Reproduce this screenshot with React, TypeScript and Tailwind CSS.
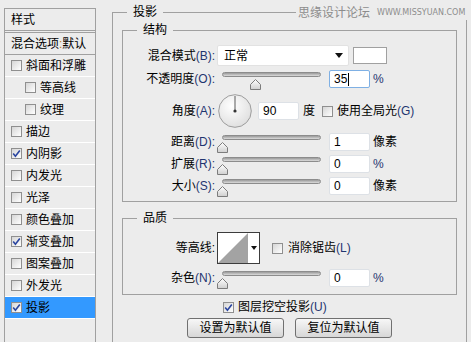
import React from 'react';

const Check = ({ checked }: { checked?: boolean }) => (
  <span className="flex h-[11px] w-[11px] shrink-0 items-center justify-center border border-[#8f8f8f] bg-linear-to-br from-[#d6d6d6] to-[#ffffff]">
    {checked && (
      <svg width="9" height="9" viewBox="0 0 9 9">
        <path d="M1.2 4.6 L3.4 7.2 L7.8 1.4" fill="none" stroke="#2a45a0" strokeWidth="1.6" />
      </svg>
    )}
  </span>
);

const Key = ({ children }: { children: React.ReactNode }) => <span className="text-[#1f3570]">{children}</span>;

const Slider = ({ pos }: { pos: number }) => (
  <div className="relative h-[20px] w-[104px] shrink-0">
    <div className="ml-[5px] mt-[6px] h-[5px] w-[99px] rounded-full border border-[#8c8c8c] bg-linear-to-b from-[#9a9a9a] to-[#dcdcdc]" />
    <svg className="absolute top-[7px]" style={{ left: pos }} width="11" height="11" viewBox="0 0 11 11">
      <defs>
        <linearGradient id="thumb" x1="0" y1="0" x2="0" y2="1">
          <stop offset="0" stopColor="#ffffff" />
          <stop offset="1" stopColor="#cfcfcf" />
        </linearGradient>
      </defs>
      <path d="M5.5 0.5 L10.5 5.5 V10.5 H0.5 V5.5 Z" fill="url(#thumb)" stroke="#7c7c7c" />
    </svg>
  </div>
);

const Field = ({ value, focused }: { value: string; focused?: boolean }) => (
  <div
    className={
      focused
        ? 'flex h-[18px] w-[41px] shrink-0 items-center rounded-[2px] border border-[#7fb0e4] bg-white pl-[4px] text-[12px]'
        : 'flex h-[18px] w-[41px] shrink-0 items-center rounded-[2px] border border-[#dde1e6] bg-white pl-[4px] text-[12px]'
    }
  >
    {value}
    {focused && <span className="ml-[1px] h-[13px] w-[1px] bg-black" />}
  </div>
);

const Label = ({ children }: { children: React.ReactNode }) => (
  <div className="w-[92px] shrink-0 whitespace-nowrap text-right">{children}</div>
);

const SliderRow = ({ label, k, value, unit, pos, focused, extra }: { label: string; k: string; value: string; unit: string; pos: number; focused?: boolean; extra?: string }) => (
  <div className={`flex h-[18px] items-center ${extra ?? ''}`}>
    <Label>
      {label}
      <Key>({k}):</Key>
    </Label>
    <div className="ml-[2px]">
      <Slider pos={pos} />
    </div>
    <div className="ml-[8px]">
      <Field value={value} focused={focused} />
    </div>
    <span className={unit === '%' ? 'ml-[3px] text-[#1f3570]' : 'ml-[3px]'}>{unit}</span>
  </div>
);

const items: { name: string; checked?: boolean; indent?: boolean; active?: boolean }[] = [
  { name: '斜面和浮雕' },
  { name: '等高线', indent: true },
  { name: '纹理', indent: true },
  { name: '描边' },
  { name: '内阴影', checked: true },
  { name: '内发光' },
  { name: '光泽' },
  { name: '颜色叠加' },
  { name: '渐变叠加', checked: true },
  { name: '图案叠加' },
  { name: '外发光' },
  { name: '投影', checked: true, active: true },
];

export default function App() {
  return (
    <div className="relative flex h-[342px] w-[471px] items-start overflow-hidden bg-[#ececec] font-['Liberation_Sans','Noto_Sans_CJK_SC',sans-serif] text-[12px] leading-[16px] text-black">
      {/* style list */}
      <div className="ml-[4px] mt-[8px] flex h-[360px] w-[92px] shrink-0 flex-col border border-[#a0a0a0]">
        <div className="flex h-[22px] items-center border-b border-[#a0a0a0] pl-[6px]">样式</div>
        <div className="mt-[1px] flex h-[23px] items-center border-y border-[#a0a0a0] pl-[6px]">
          混合选项<span className="text-[#c08020]">:</span>默认
        </div>
        {items.map((it) => (
          <div
            key={it.name}
            className={`flex h-[22px] items-center gap-[4px] border-b border-white ${it.indent ? 'pl-[20px]' : 'pl-[6px]'} ${it.active ? 'bg-[#3399ff]' : ''}`}
          >
            <Check checked={it.checked} />
            <span>{it.name}</span>
          </div>
        ))}
      </div>

      {/* main panel */}
      <fieldset className="ml-[16px] mt-[4px] h-[370px] w-[355px] shrink-0 border border-[#a0a0a0] px-[9px]">
        <legend className="ml-[5px] px-[6px] leading-[16px]">投影</legend>

        <fieldset className="mt-[2px] w-[335px] border border-[#a0a0a0] pb-[6px] pt-[7px]">
          <legend className="ml-[14px] px-[6px] leading-[16px]">结构</legend>

          <div className="flex h-[21px] items-center">
            <Label>
              混合模式<Key>(B):</Key>
            </Label>
            <div className="ml-[2px] flex h-[21px] w-[132px] items-center justify-between rounded-[2px] border border-[#e2e2e2] bg-white pl-[6px] pr-[5px]">
              <span>正常</span>
              <svg width="8" height="5" viewBox="0 0 8 5">
                <path d="M0 0 H8 L4 5 Z" fill="#111" />
              </svg>
            </div>
            <div className="ml-[4px] h-[17px] w-[34px] border border-[#a0a0a0] bg-white" />
          </div>

          <div className="mt-[3px] flex h-[20px] items-center">
            <Label>
              不透明度<Key>(O):</Key>
            </Label>
            <div className="ml-[2px]">
              <Slider pos={33} />
            </div>
            <div className="ml-[8px]">
              <Field value="35" focused />
            </div>
            <span className="ml-[3px] text-[#1f3570]">%</span>
          </div>

          <div className="mt-[5px] flex h-[34px] items-center">
            <Label>
              角度<Key>(A):</Key>
            </Label>
            <svg className="ml-[3px] shrink-0" width="34" height="34" viewBox="0 0 34 34">
              <defs>
                <radialGradient id="dial" cx="0.4" cy="0.35" r="0.7">
                  <stop offset="0" stopColor="#ffffff" />
                  <stop offset="1" stopColor="#dedede" />
                </radialGradient>
              </defs>
              <circle cx="17" cy="17" r="16.3" fill="url(#dial)" stroke="#9c9c9c" />
              <line x1="17" y1="17" x2="17" y2="2" stroke="#5a5a5a" strokeWidth="1" />
              <circle cx="17" cy="17" r="1.6" fill="#333" />
            </svg>
            <div className="ml-[6px]">
              <Field value="90" />
            </div>
            <span className="ml-[4px]">度</span>
            <div className="ml-[7px] flex items-center gap-[4px]">
              <Check />
              <span>
                使用全局光<Key>(G)</Key>
              </span>
            </div>
          </div>

          <SliderRow label="距离" k="D" value="1" unit="像素" pos={0} extra="mt-[5px]" />
          <SliderRow label="扩展" k="R" value="0" unit="%" pos={0} extra="mt-[4px]" />
          <SliderRow label="大小" k="S" value="0" unit="像素" pos={0} extra="mt-[4px]" />
        </fieldset>

        <fieldset className="mt-[8px] w-[335px] border border-[#a0a0a0] pb-[7px] pt-[6px]">
          <legend className="ml-[14px] px-[6px] leading-[16px]">品质</legend>

          <div className="flex h-[32px] items-center">
            <Label>等高线:</Label>
            <div className="ml-[2px] flex h-[32px] w-[43px] shrink-0 items-center border border-[#3c3c3c] bg-white">
              <svg className="shrink-0" width="30" height="30" viewBox="0 0 30 30">
                <path d="M0 30 L30 0 V30 Z" fill="#a3a3a3" />
              </svg>
              <svg className="ml-[3px]" width="6" height="4" viewBox="0 0 6 4">
                <path d="M0 0 H6 L3 4 Z" fill="#111" />
              </svg>
            </div>
            <div className="ml-[12px] flex items-center gap-[5px]">
              <Check />
              <span>
                消除锯齿<Key>(L)</Key>
              </span>
            </div>
          </div>

          <SliderRow label="杂色" k="N" value="0" unit="%" pos={0} extra="mt-[5px]" />
        </fieldset>

        <div className="mt-[4px] flex h-[16px] items-center gap-[4px] pl-[101px]">
          <Check checked />
          <span>
            图层挖空投影<Key>(U)</Key>
          </span>
        </div>

        <div className="mt-[3px] flex justify-center gap-[11px]">
          <button className="h-[20px] w-[97px] rounded-[3px] border border-[#707070] bg-linear-to-b from-[#f7f7f7] to-[#d7d7d7] text-[12px] leading-[16px]">
            设置为默认值
          </button>
          <button className="h-[20px] w-[97px] rounded-[3px] border border-[#707070] bg-linear-to-b from-[#f7f7f7] to-[#d7d7d7] text-[12px] leading-[16px]">
            复位为默认值
          </button>
        </div>
      </fieldset>

      {/* watermark */}
      <div className="absolute left-[296px] top-[6px] flex items-center gap-[7px] bg-[#ececec] px-[2px] text-[#8c8c8c]">
        <span className="text-[12px] leading-[14px]">思缘设计论坛</span>
        <span className="font-['DejaVu_Sans',sans-serif] text-[8px] leading-[14px]">WWW.MISSYUAN.COM</span>
      </div>
    </div>
  );
}
